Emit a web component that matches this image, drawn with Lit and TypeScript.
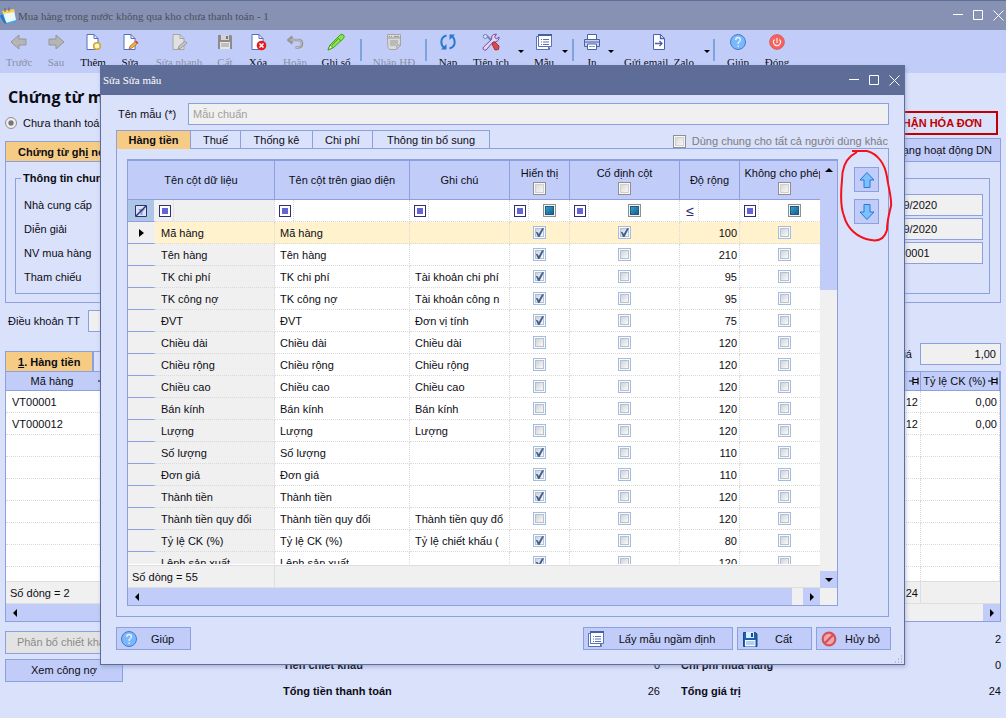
import { LitElement, html, svg, css, nothing } from "lit";
import { customElement, property } from "lit/decorators.js";
import { classMap } from "lit/directives/class-map.js";

const page = "#5470bd";

const icons: Record<string, unknown> = {
  back: svg`<path d="M1 9 9 2v4h7v6H9v4z" fill="#b5b5b5" stroke="#969696"/>`,
  next: svg`<path d="M17 9 9 2v4H2v6h7v4z" fill="#b5b5b5" stroke="#969696"/>`,
  add: svg`<path d="M3 1.500h7l4 4V16.500H3z" fill="#fff" stroke="${page}"/><path d="M10 1.500v4h4" fill="none" stroke="${page}"/><circle cx="13" cy="13" r="3.300" fill="#fff3c4" stroke="#d5a530" stroke-width="1.600"/>`,
  edit: svg`<path d="M3 1.500h7l4 4V16.500H3z" fill="#fff" stroke="${page}"/><path d="M10 1.500v4h4" fill="none" stroke="${page}"/><path d="m8 16 1-3 6-5 2 2-6 5z" fill="#f3b344" stroke="#a9762b" stroke-width=".8"/><path d="m14 9 1.500-1.300 2 2L16 11z" fill="#e0413a"/>`,
  editGrey: svg`<path d="M3 1.500h7l4 4V16.500H3z" fill="#e1e1e1" stroke="#a5a5a5"/><path d="M10 1.500v4h4" fill="none" stroke="#a5a5a5"/><path d="m8 16 1-3 6-5 2 2-6 5z" fill="#c4c4c4" stroke="#929292" stroke-width=".8"/>`,
  saveGrey: svg`<path d="M2 2h13l1 1v13H2z" fill="#8c8c8c"/><path d="M5 2h8v5H5z" fill="#d4d4d4"/><path d="M10 3h2v3h-2z" fill="#777"/><path d="M4 9h10v7H4z" fill="#e6e6e6"/><path d="M5 11h8M5 13h8" stroke="#999"/>`,
  save: svg`<path d="M2.500 2.500h12l1.500 1.500v12.500H2.500z" fill="#1c5fae" stroke="#174a91"/><path d="M5 2h8v6H5z" fill="#d8edff"/><path d="M10 3h2v4h-2z" fill="#174a91"/><path d="M4 10h10.500v6.500H4z" fill="#f4f8ff"/><path d="M5 12h8.500M5 14h8.500" stroke="#6da8e4"/>`,
  del: svg`<path d="M3 1.500h7l4 4V16.500H3z" fill="#fff" stroke="${page}"/><path d="M10 1.500v4h4" fill="none" stroke="${page}"/><circle cx="12.500" cy="12.500" r="4.800" fill="#e51c1c"/><path d="m10.500 10.500 4 4m0-4-4 4" stroke="#fff" stroke-width="1.500"/>`,
  undo: svg`<path d="M6.500 3.500 2.500 7l4 3.500M3 7h9.500q3.500 0 3.500 3.500T12 14.500H9.500" fill="none" stroke="#979797" stroke-width="2.600"/><path d="M4 7h9q2.500 0 2.500 3.300T12 14.500H10" fill="none" stroke="#c4c4c4"/>`,
  pen: svg`<path d="m1 17 2-5L13 2q2-1.500 3.500 0t0 3.500l-10 9z" fill="#8be24a" stroke="#42a31c"/><path d="m10 4 4 4M5 12l7-7" stroke="#42a31c" fill="none"/><path d="m1 17 2-5 3 2.500z" fill="#e9ffd8" stroke="#42a31c"/>`,
  invoice: svg`<path d="M2.500 1.500h13v11l-4 4H4.500l-1.500-2-.5-9z" fill="#dadada" stroke="#a5a5a5"/><path d="M2 5h14M4 3.500h1m1 0h1m2 0h5M5 8h8M5 10h8M5 12h6M12 16v-4h4" fill="none" stroke="#999"/>`,
  refresh: svg`<path d="M7.500 2.500Q2.300 4 2.300 9q.2 4 3 6" fill="none" stroke="#2b79cf" stroke-width="2"/><path d="M2 16.500h5.500V11z" fill="#2b79cf"/><path d="M10.500 15.500Q15.700 14 15.700 9q-.2-4-3-6" fill="none" stroke="#2b79cf" stroke-width="2"/><path d="M16 1.500h-5.500V7z" fill="#2b79cf"/>`,
  tools: svg`<path d="m2 2 3 1 8 8" fill="none" stroke="#7384b4" stroke-width="2"/><path d="m10 11 3-2 4 4-.5 3.500L13 17z" fill="#dc4a48" stroke="#a82f35"/><path d="m1.500 14 8-7.500Q9 3 11.500 1.500l3-.3L12.500 4l2 2L17 4q.3 4-3.500 4.800L11 9l-7 8q-2 .6-2.800-.8-.5-1 .3-2.200z" fill="#e4d5f1" stroke="#79479d"/><circle cx="3.300" cy="3.500" r="2" fill="#d8e4fb" stroke="#6f84ba"/>`,
  forms: svg`<path d="M1.500 3.500v13h13v-2" fill="#fff" stroke="#5a71b8"/><path d="M1.500 3.500h12v13h-12z" fill="#fff" stroke="#5a71b8"/><path d="M3.500 1.500h13v12h-13z" fill="#fff" stroke="#5a71b8"/><path d="M3 2h14" stroke="#47609f" stroke-width="2"/><path d="M6 6.500h1m1 0h6m-8 2.500h1m1 0h6m-8 2.500h1m1 0h6" stroke="#5a71b8"/>`,
  print: svg`<path d="M4.500 1.500h9V7h-9z" fill="#fff" stroke="#4a63a5"/><path d="M1.500 6.500h15v7h-15z" fill="#c6d2f4" stroke="#4a63a5"/><path d="M2 9h14" stroke="#4a63a5"/><path d="M4.500 11h9v5.500h-9z" fill="#fff" stroke="#4a63a5"/><path d="M6 13.500h6" stroke="#8c9ccc"/>`,
  send: svg`<path d="M3.500 1.500h7l4 4V16.500h-11z" fill="#fff" stroke="#4862b0"/><path d="M10.500 1.500v4h4M5 10.500h7m-2.500-2.500 2.500 2.500L9.500 13" fill="none" stroke="#4862b0" stroke-width="1.300"/>`,
  help: svg`<circle cx="9" cy="9" r="7.500" fill="#7db7fb" stroke="#3d7fce"/><path d="M6.700 7q0-2.500 2.300-2.500T11.400 7Q11.400 8.200 9.200 9.500v1.500M9.200 12.500v1.500" fill="none" stroke="#e8f4ff" stroke-width="1.300"/>`,
  power: svg`<circle cx="9" cy="9" r="7.300" fill="#f4645f" stroke="#dd5757"/><path d="M6.500 6.500Q4.800 8 5.600 10.300 6.800 12.700 9 12.700t3.400-2.400Q13.200 8 11.500 6.500M9 5v5" fill="none" stroke="#ffe9e5" stroke-width="1.200"/>`,
  cancel: svg`<circle cx="9" cy="9" r="6.300" fill="#efa9ae" stroke="#d6525a" stroke-width="2.200"/><path d="m5 13 8-8" stroke="#d6525a" stroke-width="2.400"/>`,
  up: svg`<path d="m9 1.500 7 7.500h-4v7.500H6V9H2z" fill="#7cc0fd" stroke="#2877d3"/>`,
  down: svg`<path d="M9 16.500 2 9h4V1.500h6V9h4z" fill="#7cc0fd" stroke="#2877d3"/>`,
  app: svg`<path d="m1 6 12-2 4 11-12 2z" fill="#42a5e8"/><path d="m3 5 11-2 2 10-10 3z" fill="#e9f7ff"/><path d="m2 4 12-2 .6 3L3 7z" fill="#ffd34d"/><path d="M5 1v4m4-4.500v4" stroke="#5c6478"/><path d="m0 9 4 7 3 1-5-10z" fill="#1f76d0"/>`,
  clear: svg`<path d="M3.500 3.500h11v11h-11z" fill="#d7e4f6" stroke="#332f74"/><path d="M6 7h7l-2.500 3v3h-2v-3z" fill="#8aa0dc"/><path d="m4 14 10-10" stroke="#332f74" stroke-width="1.400"/>`,
  pin: svg`<path d="M4 9h4m0-4v8M8 7.500h5v3H8m5-5v7" fill="none" stroke="#000" stroke-width="1.200"/>`,
};

const icon = (name: string) =>
  html`<svg class="icon" width="18" height="18" viewBox="0 0 18 18" aria-hidden="true">${icons[name]}</svg>`;

const base = css`
  * { box-sizing: border-box; }
  button, input { font: inherit; color: inherit; margin: 0; border-radius: 0; }
  button { padding: 0; border: 0; background: none; }
  .icon { display: block; flex: none; }
  .arrow { width: 0; height: 0; border: 4px solid transparent; }
  .arrow.up { border-top: 0; border-bottom-color: #000; }
  .arrow.dn { border-bottom: 0; border-top-color: #000; }
  .arrow.lt { border-left: 0; border-right-color: #000; }
  .arrow.rt { border-right: 0; border-left-color: #000; }
  .scroll { height: 17px; display: flex; background: #f0f0f0; }
  .scroll button { width: 17px; display: grid; place-items: center; background: #c1cdf8; }
  .check {
    appearance: none; display: block; width: 13px; height: 13px; position: relative; flex: none;
    border: 1px solid #a3bde0; background: linear-gradient(135deg, #c3c8cf, #fff 90%);
    box-shadow: inset 0 0 0 1px #f8fafd, inset 0 0 0 2px #b9c0cc;
  }
  .check:checked::after {
    content: ""; position: absolute; inset: 1px;
    background: #3d6195; clip-path: polygon(8% 42%, 30% 48%, 42% 66%, 78% 4%, 100% 4%, 50% 100%, 34% 100%);
  }
  .check.dark { border-color: #8e8f8f; background: linear-gradient(135deg, #d2d2d2, #fff); box-shadow: inset 0 0 0 1px #f8f8f8, inset 0 0 0 2px #d0d0d0; }
  .check.mixed { border-color: #8e8f8f; background: linear-gradient(135deg, #3cb0e0, #0d4f7c); box-shadow: inset 0 0 0 1px #f4f4f4, inset 0 0 0 2px #1b5a85; }
`;

@customElement("window-bar")
class WindowBar extends LitElement {
  @property() heading = "";
  @property() glyph = "";
  static styles = [base, css`
    :host { display: flex; align-items: center; height: 30px; font: 11px "Liberation Serif", serif; }
    .heading { flex: 1; }
    .controls { display: flex; }
    .controls button { width: 20px; height: 20px; display: grid; place-items: center; }
  `];
  render() {
    return html`
      ${this.glyph ? icon(this.glyph) : nothing}
      <span class="heading">${this.heading}</span>
      <span class="controls">
        <button aria-label="Thu nhỏ"><svg width="11" height="11"><path d="M0 4.500h10" stroke="#fff"/></svg></button>
        <button aria-label="Phóng to"><svg width="11" height="11"><path d="M.5.500h9v9h-9z" fill="none" stroke="#fff"/></svg></button>
        <button aria-label="Đóng"><svg width="11" height="11"><path d="m.5.500 10 10m0-10-10 10" stroke="#fff"/></svg></button>
      </span>`;
  }
}

type Tool = [kind: "tool" | "off" | "sep" | "menu", glyph?: string, label?: string];
const tools: Tool[] = [
  ["off", "back", "Trước"], ["off", "next", "Sau"], ["tool", "add", "Thêm"], ["tool", "edit", "Sửa"],
  ["off", "editGrey", "Sửa nhanh"], ["off", "saveGrey", "Cất"], ["tool", "del", "Xóa"], ["off", "undo", "Hoãn"],
  ["tool", "pen", "Ghi sổ"], ["sep"], ["off", "invoice", "Nhận HĐ"], ["sep"], ["tool", "refresh", "Nạp"],
  ["tool", "tools", "Tiện ích"], ["menu"], ["tool", "forms", "Mẫu"], ["menu"], ["sep"], ["tool", "print", "In"],
  ["menu"], ["tool", "send", "Gửi email, Zalo"], ["menu"], ["sep"], ["tool", "help", "Giúp"], ["tool", "power", "Đóng"],
];

@customElement("tool-bar")
class ToolBar extends LitElement {
  static styles = [base, css`
    :host {
      display: grid; height: 43px; background: #c1cdf8; padding-top: 3px; overflow: hidden;
      font: 11px/22px "Liberation Serif", serif;
      grid-template-columns: 38px 36px 38px 36px 62px 30px 36px 38px 44px 6px 60px 4px 40px 46px 14px 32px 10px 6px 32px 6px 90px 6px 8px 40px 38px;
    }
    .tool { display: flex; flex-direction: column; align-items: center; white-space: nowrap; line-height: 22px; height: 40px; }
    .tool:disabled { color: #8a8fa3; }
    .sep { width: 2px; height: 22px; margin-top: 6px; background: #7da3dc; justify-self: center; }
    .menu { display: grid; justify-content: center; align-content: start; padding-top: 17px; height: 22px; }
    .menu .arrow { border-width: 3px 3px 0; }
  `];
  render() {
    return tools.map(([kind, glyph, label]) =>
      kind === "sep" ? html`<span class="sep"></span>`
      : kind === "menu" ? html`<button class="menu" aria-label="Mở danh sách"><span class="arrow dn"></span></button>`
      : html`<button class="tool" ?disabled=${kind === "off"}>${icon(glyph!)}<span>${label}</span></button>`);
  }
}

type Row = [source: string, note: string, shown: boolean, width: number];
const rows: Row[] = [
  ["Mã hàng", "", true, 100],
  ["Tên hàng", "", true, 210],
  ["TK chi phí", "Tài khoản chi phí", true, 95],
  ["TK công nợ", "Tài khoản công n", true, 95],
  ["ĐVT", "Đơn vị tính", true, 75],
  ["Chiều dài", "Chiều dài", false, 120],
  ["Chiều rộng", "Chiều rộng", false, 120],
  ["Chiều cao", "Chiều cao", false, 120],
  ["Bán kính", "Bán kính", false, 120],
  ["Lượng", "Lượng", false, 120],
  ["Số lượng", "", true, 110],
  ["Đơn giá", "", true, 110],
  ["Thành tiền", "", true, 120],
  ["Thành tiền quy đổi", "Thành tiền quy đổ", false, 120],
  ["Tỷ lệ CK (%)", "Tỷ lệ chiết khấu (", true, 80],
  ["Lệnh sản xuất", "", true, 120],
];

const operator = html`<button class="op" aria-label="Kiểu lọc"><span class="dot"></span></button>`;

@customElement("column-grid")
class ColumnGrid extends LitElement {
  static styles = [base, css`
    :host {
      display: grid; grid-template: minmax(0, 1fr) 23px 17px / minmax(0, 1fr) 17px;
      border: 1px solid #8c9fdf; border-top-width: 2px; background: #f0f0f0; min-height: 0; flex: 1;
    }
    .view { overflow: hidden; background: #fff; border-bottom: 1px solid #fff; }
    table { table-layout: fixed; border-collapse: separate; border-spacing: 0; width: 702px; }
    .c0 { width: 27px; } .c1 { width: 120px; } .c2 { width: 135px; } .c3 { width: 100px; }
    .c4, .c6 { width: 60px; } .c5 { width: 110px; } .c7 { width: 90px; }
    th { height: 39px; padding: 0; font-weight: 400; background: #c1cdf8; border: 1px solid #8c9fdf; border-width: 0 1px 1px 0; text-align: center; white-space: nowrap; line-height: 14px; }
    th .check { margin: 2px auto 0; }
    td { height: 22px; padding: 0 0 0 5px; border: 1px dotted #d9d9d9; border-width: 0 1px 1px 0; white-space: nowrap; overflow: hidden; line-height: 20px; }
    td.name { background: #f0f0f0; padding-left: 6px; }
    td.lead { background: #f0f0f0; border-bottom: 1px solid #8c9fdf; border-right-style: solid; border-right-color: #f0f0f0; padding: 0; }
    td.lead .arrow { margin-left: 11px; border-width: 4px 0 4px 5px; }
    td.box .check { margin: 0 auto; }
    td.box { padding: 0; }
    td.num { text-align: right; padding: 0 2px 0 0; }
    .active td { background: #fff2cc; }
    .active td.lead { background: #f0f0f0; }
    .filter td { padding: 0; }
    .filter td.lead { background: #adc6e8; }
    .filter td.lead button { margin-left: 4px; display: block; }
    .cell { display: flex; align-items: center; height: 21px; }
    .slot { flex: 1; display: grid; place-items: center; }
    .op { flex: none; width: 19px; height: 21px; display: grid; place-items: center; border-right: 1px dotted #d9d9d9; padding-left: 2px; color: #332f74; }
    .op.less { font-size: 14px; }
    .dot { width: 12px; height: 12px; border: 1px solid #332f74; background: #6464d2; box-shadow: inset 0 0 0 2px #fff; }
    .vbar { grid-column: 2; grid-row: 1 / 3; display: flex; flex-direction: column; background: #f0f0f0; }
    .vbar button { height: 17px; display: grid; place-items: center; background: #c1cdf8; }
    .vthumb { height: 112px; background: #c1cdf8; }
    .fill { flex: 1; }
    .sum { display: flex; border: 1px solid #dedede; border-width: 1px 0; line-height: 22px; }
    .count { width: 147px; padding-left: 4px; border-right: 1px solid #dedede; }
    .hthumb { flex: 1; background: #c1cdf8; margin-right: 11px; }
  `];
  render() {
    const box = (label: string, on: boolean, kind = "") =>
      html`<input type="checkbox" class=${classMap({ check: true, [kind || "plain"]: true })} aria-label=${label} .checked=${on}>`;
    const mixed = (label: string) => html`<span class="cell">${operator}<span class="slot">${box(label, false, "mixed")}</span></span>`;
    return html`
      <div class="view">
        <table>
          <colgroup>${[0, 1, 2, 3, 4, 5, 6, 7].map((n) => html`<col class="c${n}">`)}</colgroup>
          <thead><tr>
            <th colspan="2">Tên cột dữ liệu</th><th>Tên cột trên giao diện</th><th>Ghi chú</th>
            <th>Hiển thị${box("Hiển thị tất cả", false, "dark")}</th>
            <th>Cố định cột${box("Cố định tất cả", false, "dark")}</th>
            <th>Độ rộng</th>
            <th>Không cho phép${box("Không cho phép tất cả", false, "dark")}</th>
          </tr></thead>
          <tbody>
            <tr class="filter">
              <td class="lead"><button aria-label="Xóa lọc">${icon("clear")}</button></td>
              <td class="name">${operator}</td><td>${operator}</td><td>${operator}</td>
              <td>${mixed("Lọc hiển thị")}</td><td>${mixed("Lọc cố định")}</td>
              <td><button class="op less" aria-label="Kiểu lọc độ rộng">≤</button></td>
              <td>${mixed("Lọc không cho phép")}</td>
            </tr>
            ${rows.map(([name, note, shown, width], i) => html`
              <tr class=${classMap({ active: i === 0 })}>
                <td class="lead">${i === 0 ? html`<div class="arrow rt"></div>` : nothing}</td>
                <td class="name">${name}</td><td>${name}</td><td>${note}</td>
                <td class="box">${box(`Hiển thị ${name}`, shown)}</td>
                <td class="box">${box(`Cố định ${name}`, i === 0)}</td>
                <td class="num">${width}</td>
                <td class="box">${box(`Không cho phép ${name}`, false)}</td>
              </tr>`)}
          </tbody>
        </table>
      </div>
      <div class="vbar">
        <button aria-label="Cuộn lên"><span class="arrow up"></span></button>
        <span class="vthumb"></span><span class="fill"></span>
        <button aria-label="Cuộn xuống"><span class="arrow dn"></span></button>
      </div>
      <div class="sum"><span class="count">Số dòng = 55</span></div>
      <div class="scroll">
        <button aria-label="Cuộn trái"><span class="arrow lt"></span></button>
        <span class="hthumb"></span>
        <button aria-label="Cuộn phải"><span class="arrow rt"></span></button>
      </div>`;
  }
}

@customElement("template-dialog")
class TemplateDialog extends LitElement {
  static styles = [base, css`
    :host { display: flex; flex-direction: column; background: #dae1fb; border: 1px solid #5e6c98; border-top: 0; box-shadow: 1px 2px 4px #7884b077; }
    window-bar { background: #5e6c98; color: #fff; padding-left: 2px; flex: none; }
    .name-row { display: flex; align-items: center; margin: 8px 15px 5px 17px; height: 22px; flex: none; }
    .name-row label { width: 70px; }
    .name-row input { flex: 1; min-width: 0; height: 22px; border: 1px solid #8c9fdf; background: #f0f0f0; padding: 0 4px; }
    .name-row input:disabled { color: #a0a0a0; }
    .tab-row { display: flex; margin: 0 16px 0 15px; height: 18px; flex: none; }
    .tab { height: 19px; border: 1px solid #8c9fdf; border-left: 0; line-height: 18px; text-align: center; }
    .tab.on { position: relative; z-index: 1; font-weight: 700; background: #f6cc84; border-left: 1px solid #8c9fdf; border-bottom: 0; width: 75px; }
    .w50 { width: 50px; } .w60 { width: 60px; } .w72 { width: 72px; } .w117 { width: 117px; }
    .shared { margin-left: auto; display: flex; align-items: center; gap: 6px; color: #7c7c80; height: 22px; line-height: 22px; }
    .panel { flex: 1; min-height: 0; display: flex; gap: 16px; margin: 0 15px; padding: 10px; border: 1px solid #8c9fdf; }
    .moves { position: relative; width: 25px; margin-right: -1px; padding-top: 8px; display: flex; flex-direction: column; gap: 7px; }
    .moves button { width: 25px; height: 25px; display: grid; place-items: center; background: #c1cdf8; border: 1px solid #8c9fdf; }
    .mark { position: absolute; left: -15px; top: -11px; pointer-events: none; }
    .actions { display: flex; gap: 4px; margin: 10px 13px 14px 15px; flex: none; position: relative; }
    .actions button { display: flex; align-items: center; width: 75px; height: 23px; padding: 0 3px; background: #c1cdf8; border: 1px solid #8c9fdf; }
    .actions button span { flex: 1; text-align: center; }
    .actions .wide { width: 150px; margin-left: auto; }
    .grip { position: absolute; right: -12px; bottom: -13px; }
  `];
  render() {
    return html`
      <window-bar heading="Sửa Sửa mẫu"></window-bar>
      <div class="name-row"><label for="name">Tên mẫu (*)</label><input id="name" value="Mẫu chuẩn" disabled></div>
      <div class="tab-row">
        <button class="tab on">Hàng tiền</button><button class="tab w50">Thuế</button><button class="tab w72">Thống kê</button>
        <button class="tab w60">Chi phí</button><button class="tab w117">Thông tin bổ sung</button>
        <label class="shared"><input type="checkbox" class="check dark" disabled>Dùng chung cho tất cả người dùng khác</label>
      </div>
      <div class="panel">
        <column-grid></column-grid>
        <div class="moves">
          <button aria-label="Chuyển lên">${icon("up")}</button><button aria-label="Chuyển xuống">${icon("down")}</button>
          <svg class="mark" width="56" height="96" viewBox="0 0 56 96" aria-hidden="true">
            <path d="M13 3h15c11 3 18 13 20 26 1 9 5 21 4 29-2 8-4 15-4 24-2 7-6 12-16 10C18 90 8 80 5 68 1 58 2 42 3 32 3 22 5 14 12 8l6-4" fill="none" stroke="#f5111c" stroke-width="2"/>
          </svg>
        </div>
      </div>
      <div class="actions">
        <button>${icon("help")}<span>Giúp</span></button>
        <button class="wide">${icon("forms")}<span>Lấy mẫu ngầm định</span></button>
        <button>${icon("save")}<span>Cất</span></button>
        <button>${icon("cancel")}<span>Hủy bỏ</span></button>
        <svg class="grip" width="9" height="9"><path d="M1 8h1m2 0h1m2 0h1M4 5h1m2 0h1M7 2h1" stroke="#a9aec4" stroke-width="1.500"/></svg>
      </div>`;
  }
}

@customElement("app-root")
class AppRoot extends LitElement {
  static styles = [base, css`
    :host { display: block; position: relative; height: 100vh; overflow: hidden; background: #dae1fb; color: #0c0c14; font: 11px/16px "Liberation Sans", Arial, sans-serif; }
    .main-bar { background: #8791b3; color: #4c4f5c; border-top: 1px solid #5e6c98; box-sizing: border-box; margin-right: -2px; }
    .page { padding: 0 5px; }
    h1 { margin: 0; padding: 12px 3px 0; font: bold 16px/24px "Open Sans", sans-serif; }
    .status { display: flex; align-items: center; justify-content: space-between; height: 24px; margin: 2px 3px 3px 0; }
    .status label { display: flex; align-items: center; gap: 6px; }
    .status input { appearance: none; width: 12px; height: 12px; border: 1px solid #8e8f8f; border-radius: 50%; background: radial-gradient(#777 30%, #eee 45%); }
    .stamp { border: 2px solid #c00000; color: #c00000; font-weight: 700; line-height: 20px; padding: 0 14px; }
    .tabs { display: flex; justify-content: space-between; align-items: flex-end; }
    .tab { height: 20px; border: 1px solid #8c9fdf; border-bottom: 0; padding: 0 12px; font-weight: 700; background: #f6cc84; line-height: 20px; }
    .tab.plain { height: 23px; padding: 0 8px; font-weight: 400; background: #c1cdf8; }
    .tab.blank { width: 90px; background: #dae1fb; }
    .sheet { display: flex; justify-content: space-between; gap: 10px; border: 1px solid #8c9fdf; height: 142px; padding: 8px 10px 8px 9px; }
    fieldset { border: 1px solid #8c9fdf; margin: 0; padding: 0 6px 0 8px; min-width: 0; }
    .general { flex: 1; }
    legend { font-weight: 700; padding: 0 2px; margin-left: -3px; }
    .lines { display: grid; line-height: 24px; padding-top: 7px; }
    .voucher { margin-top: 8px; padding-top: 15px; display: grid; gap: 2px; align-content: start; }
    .field { height: 22px; border: 1px solid #8c9fdf; background: #f0f0f0; padding: 0 4px; width: 106px; }
    .terms { display: flex; align-items: center; gap: 8px; padding: 7px 3px 0; }
    .rate { display: flex; justify-content: flex-end; align-items: center; gap: 8px; height: 22px; margin-top: 11px; }
    .rate .field { width: 81px; text-align: right; }
    .lower { justify-content: flex-start; margin-top: -14px; }
    .lower .tab.blank { height: 20px; }
    .goods { border: 1px solid #8c9fdf; height: 251px; display: flex; flex-direction: column; background: #fff; }
    table { table-layout: fixed; width: 100%; border-collapse: separate; border-spacing: 0; }
    .rows { flex: 1; overflow: hidden; }
    .code { width: 104px; } .qty { width: 60px; } .pct { width: 79px; }
    th { height: 19px; padding: 0; font-weight: 400; background: #c1cdf8; border: 1px solid #8c9fdf; border-width: 0 1px 1px 0; white-space: nowrap; }
    .head { display: flex; align-items: center; }
    .head span { flex: 1; }
    .head .icon { margin: 0 -3px 0 -4px; }
    td { height: 22px; padding: 0 2px 0 6px; border: 1px dotted #d9d9d9; border-width: 0 1px 1px 0; }
    td.num { text-align: right; }
    .sum { display: grid; grid-template-columns: 1fr 60px 79px; height: 23px; line-height: 22px; background: #f0f0f0; border: 1px solid #dedede; border-width: 1px 0; padding-left: 4px; }
    .sum .qty { text-align: right; padding-right: 2px; border-right: 1px solid #dedede; }
    .goods .thumb { flex: 1; background: #c1cdf8; margin-right: 90px; }
    .bottom { display: grid; grid-template-columns: 278px 377px 21px 1fr; line-height: 26px; padding-top: 4px; }
    .side { display: flex; flex-direction: column; align-items: flex-start; gap: 5px; padding-top: 5px; }
    .side button { width: 118px; height: 23px; background: #c1cdf8; border: 1px solid #8c9fdf; white-space: nowrap; line-height: 21px; }
    .side button:disabled { background: #e3e3e3; color: #8b8b8b; }
    .totals { margin: 0; display: grid; grid-template-columns: 1fr auto; grid-auto-rows: 26px; }
    .totals dt { font-weight: 700; }
    .totals dd { margin: 0; text-align: right; }
    .far { grid-column: 4; }
    template-dialog { position: absolute; left: 100px; right: 101px; top: 65px; bottom: 53px; }
  `];
  render() {
    return html`
      <window-bar class="main-bar" glyph="app" heading="Mua hàng trong nước không qua kho chưa thanh toán - 1"></window-bar>
      <tool-bar></tool-bar>
      <div class="page">
        <h1>Chứng từ mua hàng</h1>
        <div class="status">
          <label><input type="radio" name="paid" checked>Chưa thanh toán</label>
          <span class="stamp">ĐÃ NHẬN HÓA ĐƠN</span>
        </div>
        <div class="tabs"><button class="tab">Chứng từ gh<u>i</u> nợ</button><button class="tab plain">Tình trạng hoạt động DN</button></div>
        <div class="sheet">
          <fieldset class="general">
            <legend>Thông tin chung</legend>
            <div class="lines"><span>Nhà cung cấp</span><span>Diễn giải</span><span>NV mua hàng</span><span>Tham chiếu</span></div>
          </fieldset>
          <fieldset class="voucher">
            <input class="field" aria-label="Ngày hạch toán" value="01/09/2020">
            <input class="field" aria-label="Ngày chứng từ" value="01/09/2020">
            <input class="field" aria-label="Số chứng từ" value="MH00001">
          </fieldset>
        </div>
        <div class="terms"><label for="terms">Điều khoản TT</label><input class="field" id="terms"></div>
        <div class="rate"><label for="rate">Tỷ giá</label><input class="field" id="rate" value="1,00"></div>
        <div class="tabs lower"><button class="tab"><u>1</u>. Hàng tiền</button><button class="tab blank" aria-label="Thuế"></button></div>
        <div class="goods">
          <div class="rows">
            <table>
              <colgroup><col class="code"><col><col class="qty"><col class="pct"></colgroup>
              <thead><tr>
                <th><div class="head"><span>Mã hàng</span>${icon("pin")}</div></th><th></th>
                <th><div class="head"><span></span>${icon("pin")}</div></th>
                <th><div class="head"><span>Tỷ lệ CK (%)</span>${icon("pin")}</div></th>
              </tr></thead>
              <tbody>
                ${["VT00001", "VT000012"].map((code) => html`<tr><td>${code}</td><td></td><td class="num">12</td><td class="num">0,00</td></tr>`)}
                ${Array.from({ length: 7 }, () => html`<tr><td></td><td></td><td></td><td></td></tr>`)}
              </tbody>
            </table>
          </div>
          <div class="sum"><span>Số dòng = 2</span><span class="qty">24</span></div>
          <div class="scroll">
            <button aria-label="Cuộn trái"><span class="arrow lt"></span></button><span class="thumb"></span>
            <button aria-label="Cuộn phải"><span class="arrow rt"></span></button>
          </div>
        </div>
        <div class="bottom">
          <div class="side"><button disabled>Phân bổ chiết khấu</button><button>Xem công nợ</button></div>
          <dl class="totals"><dt></dt><dd></dd><dt>Tiền chiết khấu</dt><dd>0</dd><dt>Tổng tiền thanh toán</dt><dd>26</dd></dl>
          <dl class="totals far"><dt></dt><dd>2</dd><dt>Chi phí mua hàng</dt><dd>0</dd><dt>Tổng giá trị</dt><dd>24</dd></dl>
        </div>
      </div>
      <template-dialog role="dialog" aria-label="Sửa mẫu"></template-dialog>`;
  }
}
